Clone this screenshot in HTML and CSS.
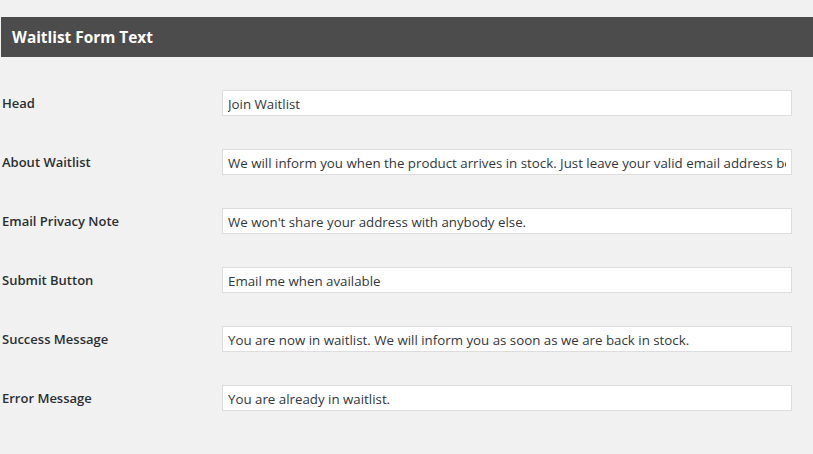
FILE: index.html
```html
<!DOCTYPE html>
<html>
<head>
<meta charset="utf-8">
<link rel="stylesheet" href="styles.css">
</head>
<body>
<div class="page">
  <h2 class="section-title">Waitlist Form Text</h2>
  <div class="form">
    <div class="row"><label class="label">Head</label><input class="field" type="text" value="Join Waitlist"></div>
    <div class="row"><label class="label">About Waitlist</label><input class="field" type="text" value="We will inform you when the product arrives in stock. Just leave your valid email address below."></div>
    <div class="row"><label class="label">Email Privacy Note</label><input class="field" type="text" value="We won't share your address with anybody else."></div>
    <div class="row"><label class="label">Submit Button</label><input class="field" type="text" value="Email me when available"></div>
    <div class="row"><label class="label">Success Message</label><input class="field" type="text" value="You are now in waitlist. We will inform you as soon as we are back in stock."></div>
    <div class="row"><label class="label">Error Message</label><input class="field" type="text" value="You are already in waitlist."></div>
  </div>
</div>
</body>
</html>
```
FILE: styles.css
```css
html, body {
  margin: 0;
  padding: 0;
  background: #f1f1f1;
}
body {
  font-family: "Open Sans", "Noto Sans", sans-serif;
  color: #23282d;
}
.page {
  padding-top: 17px;
}
.section-title {
  margin: 0 0 0 1px;
  height: 40px;
  box-sizing: border-box;
  background: #4c4c4c;
  color: #fff;
  font-size: 15.4px;
  font-weight: 700;
  line-height: 38px;
  padding-top: 2px;
  padding-left: 11px;
}
.form {
  display: flex;
  flex-direction: column;
  gap: 33px;
  padding-top: 33px;
}
.row {
  display: grid;
  grid-template-columns: 222px 570px;
  align-items: center;
  height: 26px;
}
.label {
  padding-left: 2px;
  font-size: 13px;
  font-weight: 600;
  color: #2b2f33;
  margin-top: -1px;
}
.field {
  box-sizing: border-box;
  width: 570px;
  height: 26px;
  margin: 0;
  border: 1px solid #ddd;
  background: #fff;
  padding: 1px 5px 0;
  font-family: "Open Sans", "Noto Sans", sans-serif;
  font-size: 13.3px;
  color: #32373c;
  outline: none;
}
```
